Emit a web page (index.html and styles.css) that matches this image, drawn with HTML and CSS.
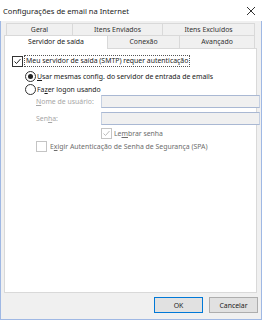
FILE: index.html
```html
<!DOCTYPE html>
<html lang="pt">
<head>
    <meta charset="UTF-8">
    <title>Configurações de email na Internet</title>
    <link rel="stylesheet" href="styles.css">
</head>
<body>
    <div class="window">
        <div class="titleBar">
            <span class="title">Configurações de email na Internet</span>
            <svg class="close" width="10" height="10" viewBox="0 0 10 10">
                <path d="M1 1 L9 9 M9 1 L1 9" stroke="#333" stroke-width="1" fill="none"/>
            </svg>
        </div>

        <div class="content">
            <div class="tabRow backRow">
                <div class="tab t1">Geral</div>
                <div class="tab t2">Itens Enviados</div>
                <div class="tab t3">Itens Excluídos</div>
            </div>
            <div class="tabRow frontRow">
                <div class="tab selected t4">Servidor de saída</div>
                <div class="tab t5">Conexão</div>
                <div class="tab t6">Avançado</div>
            </div>

            <div class="panel">
                <div class="option">
                    <span class="check checked">
                        <svg width="9" height="9" viewBox="0 0 9 9"><path d="M1.5 4.5 L3.5 6.5 L7.5 2" stroke="#222" stroke-width="1" fill="none"/></svg>
                    </span>
                    <span class="focus">Meu servidor de saída (SMTP) requer autenticação</span>
                </div>

                <div class="option indent1">
                    <span class="radio on"></span>
                    <span><u>U</u>sar mesmas config. do servidor de entrada de emails</span>
                </div>
                <div class="option indent1 logon">
                    <span class="radio"></span>
                    <span>Fa<u>z</u>er logon usando</span>
                </div>

                <div class="field">
                    <label class="disabled"><u>N</u>ome de usuário:</label>
                    <div class="input"></div>
                </div>
                <div class="field">
                    <label class="disabled">Sen<u>h</u>a:</label>
                    <div class="input"></div>
                </div>

                <div class="option remember">
                    <span class="check dim">
                        <svg width="9" height="9" viewBox="0 0 9 9"><path d="M1.5 4.5 L3.5 6.5 L7.5 2" stroke="#bbb" stroke-width="1" fill="none"/></svg>
                    </span>
                    <span class="grey">Le<u>m</u>brar senha</span>
                </div>
                <div class="option indent2">
                    <span class="check dim"></span>
                    <span class="grey">E<u>x</u>igir Autenticação de Senha de Segurança (SPA)</span>
                </div>
            </div>

            <div class="buttons">
                <button class="default">OK</button>
                <button>Cancelar</button>
            </div>
        </div>
    </div>
</body>
</html>
```

FILE: styles.css
```css
body {
    margin: 0;
    font-family: "Noto Sans", "Liberation Sans", sans-serif;
    font-size: 6.9px;
    color: #1a1a1a;
}
.window {
    width: 262px;
    height: 320px;
    box-sizing: border-box;
    border: 1px solid #9fb8e4;
    border-top: none;
    background: #f0f0f0;
    display: flex;
    flex-direction: column;
}
.titleBar {
    height: 21px;
    background: #fff;
    display: flex;
    align-items: center;
    justify-content: space-between;
    padding: 0 4px 0 3px;
    margin: 0 -1px;
}
.title {
    font-size: 7.6px;
    color: #222;
}
.close {
    margin-right: 2px;
}
.content {
    flex: 1;
    padding: 2px 3px 0 3px;
    display: flex;
    flex-direction: column;
}
.tabRow {
    display: flex;
    color: #333;
}
.tab {
    box-sizing: border-box;
    text-align: center;
    border: 1px solid #d9d9d9;
    border-bottom: none;
    background: #f0f0f0;
}
.tab + .tab {
    border-left: none;
}
.backRow {
    padding-left: 2px;
    height: 12px;
}
.backRow .tab {
    line-height: 11px;
}
.t1 { width: 67px; }
.t2 { width: 90px; }
.t3 { width: 92px; }
.frontRow {
    height: 13px;
}
.frontRow .tab {
    line-height: 12px;
}
.t4 { width: 104px; }
.t5 { width: 72px; }
.t6 { width: 75px; }
.tab.selected {
    background: #fff;
    border-color: #d9d9d9;
    margin-bottom: -1px;
    height: 14px;
    position: relative;
    z-index: 1;
    color: #222;
}
.panel {
    height: 245px;
    box-sizing: border-box;
    background: #fff;
    border: 1px solid #d9d9d9;
    margin-right: 1px;
    padding: 6px 0 0 7px;
}
.option {
    display: flex;
    align-items: center;
    gap: 2px;
    height: 12px;
}
.check {
    width: 9px;
    height: 9px;
    border: 1px solid #333;
    background: #fff;
    display: inline-flex;
}
.check.dim {
    border-color: #c4c4c4;
}
.focus {
    outline: 1px dotted #555;
    outline-offset: 0;
    padding: 0 1px;
    line-height: 10px;
}
.indent1 {
    margin-top: 3px;
    padding-left: 13px;
    gap: 1px;
}
.logon {
    margin-top: 1px;
}
.radio {
    width: 9px;
    height: 9px;
    border: 1px solid #333;
    border-radius: 50%;
    box-sizing: content-box;
    display: inline-flex;
    align-items: center;
    justify-content: center;
}
.radio.on::after {
    content: "";
    width: 5px;
    height: 5px;
    border-radius: 50%;
    background: #222;
}
.field {
    display: flex;
    align-items: center;
    height: 13px;
    margin-top: 0;
    padding-left: 24px;
}
.field + .field {
    margin-top: 4px;
}
.field label {
    width: 65px;
}
.disabled {
    color: #a6a6a6;
}
.input {
    flex: 1;
    height: 13px;
    box-sizing: border-box;
    background: #f0f0f0;
    border: 1px solid #c5d0e2;
    border-top-color: #a9b8d3;
    border-bottom-color: #a9b8d3;
    margin-right: -4px;
}
.remember {
    margin-top: 2px;
    padding-left: 89px;
}
.indent2 {
    margin-top: 1px;
    padding-left: 24px;
    gap: 3px;
}
.grey {
    color: #6d6d6d;
}
.buttons {
    display: flex;
    justify-content: flex-end;
    gap: 6px;
    padding: 4px 0 0 0;
}
button {
    width: 49px;
    height: 16px;
    font-family: inherit;
    font-size: 6.9px;
    color: #222;
    background: #e1e1e1;
    border: 1px solid #adadad;
    padding: 0;
}
button.default {
    border-color: #0078d7;
}
```
